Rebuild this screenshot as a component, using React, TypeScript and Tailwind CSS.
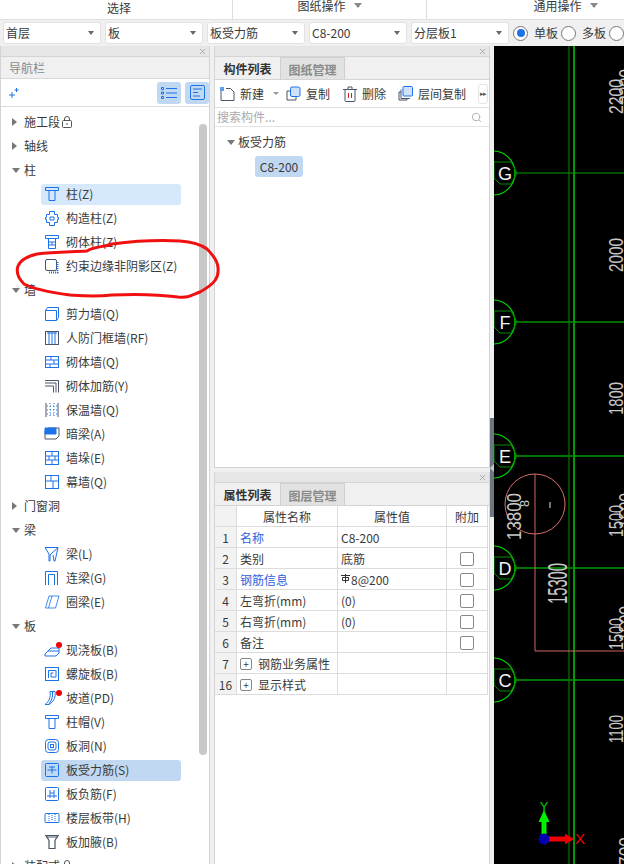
import { Search, X } from 'lucide-react';

const font = { fontFamily: '"Noto Sans CJK SC", "Liberation Sans", sans-serif' };
const BLUE = '#1c72e8';
const DARK = '#4a5568';

function Ico({ children }: { children: React.ReactNode }) {
  return (
    <svg width="16" height="16" viewBox="0 0 16 16" fill="none" stroke={BLUE} strokeWidth="1" className="shrink-0">
      {children}
    </svg>
  );
}

const icons: Record<string, React.ReactNode> = {
  column: <><path d="M1.5 1.5h13v3h-13zM4.5 4.5h7M5 4.5v10h6v-10" /></>,
  gz: <><path d="M5.5 1.5h5v3h3v3h1v2h-1v3h-3v3h-5v-3h-3v-3h-1v-2h1v-3h3z" /><path d="M6 7h4v3H6z" /></>,
  qt: <><path d="M1.5 1.5h13v3h-13zM4.5 4.5h7v10h-7zM4.5 8h7M4.5 11h7M8 8v3" /></>,
  yueshu: <><rect x="1.5" y="1.5" width="11" height="11" rx="1.5" stroke={DARK} /><path d="M13.5 4v10.5H4" stroke={BLUE} strokeWidth="2" strokeDasharray="1 1" /></>,
  shear: <><path d="M1.5 4.5h11v10h-11zM1.5 4.5l2-3h11v10l-2 3" /></>,
  rf: <><rect x="1.5" y="1.5" width="13" height="13" stroke={DARK} /><path d="M5 2v12M8 2v12M11 2v12M3 3h10" /></>,
  brick: <><rect x="1.5" y="2.5" width="13" height="11" /><path d="M1.5 6h13M1.5 10h13M7 2.5V6M10 6v4M6 10v3.5" /></>,
  rebar: <><path d="M1 2.5h13.5v12M1 5h11v9.5M1 8h8.5v6.5M9.5 8v6" stroke={DARK} /></>,
  insul: <><path d="M2 1v14M14 1v14" stroke={DARK} /><path d="M6 1v14M10 1v14M3 4h10M3 8h10M3 12h10" strokeDasharray="1 2" /></>,
  anliang: <><path d="M1 5l3-3h11v8l-3 3H1z" stroke={DARK} /><path d="M1 2h11v6H1z" fill={BLUE} /></>,
  duo: <><rect x="1.5" y="1.5" width="13" height="13" /><path d="M1.5 6h13M1.5 10h13M8 1.5V6M5 6v4M11 6v4M8 10v4.5" /></>,
  mu: <><rect x="1.5" y="1.5" width="13" height="13" /><path d="M1.5 7h13M7 1.5V7M9 7v7.5" /></>,
  beam: <><path d="M1 1.5h13L6 9v6h-1V8zM14 1.5L11 15h-1l-1-6" /></>,
  lian: <><path d="M1.5 15V1.5h12V15M4.5 15V4.5h6V15" /></>,
  quan: <><path d="M5 2h10l-3.5 12H1.5zM8 2L4.5 14" strokeOpacity="0.8" /></>,
  xj: <><path d="M1 12l3-3h11v2l-3 3H1zM4 9l3-3h8v3" /></>,
  spiral: <><rect x="1.5" y="1.5" width="13" height="13" /><path d="M4.5 12V4.5H12V11H7V7h2.5" /></>,
  ramp: <><path d="M6 1.5h5c1 5-1 10-6 13H1C5 12 7 7 6 1.5zM8.5 2c.5 4-.5 8-3.5 12" /></>,
  cap: <><path d="M1.5 1.5h13v3h-13zM5 4.5v10h6v-10" /></>,
  hole: <><rect x="1.5" y="1.5" width="13" height="13" rx="3" /><rect x="4" y="4" width="8" height="8" rx="2" /><rect x="6.5" y="6.5" width="3" height="3" /></>,
  rebarS: <><rect x="1.5" y="1.5" width="13" height="13" rx="1" /><path d="M3.5 8h9M8 4.5v7M5 5h6" /></>,
  rebarF: <><rect x="1.5" y="1.5" width="13" height="13" rx="1" /><path d="M3 10h10M6 4v8M10 4v8M6 7h4" /></>,
  band: <><rect x="1" y="3.5" width="14" height="9" rx="1" /><path d="M5 4v8M11 4v8M8 5v6" strokeDasharray="1 1" /></>,
  jiaye: <><path d="M1 1.5h14M2 1.5l3 5v8h6v-8l3-5" stroke={DARK} strokeWidth="1.2" /><path d="M2 3h12" stroke={DARK} /></>,
};

type Row =
  | { k: 'g'; t: string; open: boolean; lock?: boolean }
  | { k: 'i'; t: string; ic: string; sel?: 1 | 2; dot?: boolean };

const rows: Row[] = [
  { k: 'g', t: '施工段', open: false, lock: true },
  { k: 'g', t: '轴线', open: false },
  { k: 'g', t: '柱', open: true },
  { k: 'i', t: '柱(Z)', ic: 'column', sel: 1 },
  { k: 'i', t: '构造柱(Z)', ic: 'gz' },
  { k: 'i', t: '砌体柱(Z)', ic: 'qt' },
  { k: 'i', t: '约束边缘非阴影区(Z)', ic: 'yueshu' },
  { k: 'g', t: '墙', open: true },
  { k: 'i', t: '剪力墙(Q)', ic: 'shear' },
  { k: 'i', t: '人防门框墙(RF)', ic: 'rf' },
  { k: 'i', t: '砌体墙(Q)', ic: 'brick' },
  { k: 'i', t: '砌体加筋(Y)', ic: 'rebar' },
  { k: 'i', t: '保温墙(Q)', ic: 'insul' },
  { k: 'i', t: '暗梁(A)', ic: 'anliang' },
  { k: 'i', t: '墙垛(E)', ic: 'duo' },
  { k: 'i', t: '幕墙(Q)', ic: 'mu' },
  { k: 'g', t: '门窗洞', open: false },
  { k: 'g', t: '梁', open: true },
  { k: 'i', t: '梁(L)', ic: 'beam' },
  { k: 'i', t: '连梁(G)', ic: 'lian' },
  { k: 'i', t: '圈梁(E)', ic: 'quan' },
  { k: 'g', t: '板', open: true },
  { k: 'i', t: '现浇板(B)', ic: 'xj', dot: true },
  { k: 'i', t: '螺旋板(B)', ic: 'spiral' },
  { k: 'i', t: '坡道(PD)', ic: 'ramp', dot: true },
  { k: 'i', t: '柱帽(V)', ic: 'cap' },
  { k: 'i', t: '板洞(N)', ic: 'hole' },
  { k: 'i', t: '板受力筋(S)', ic: 'rebarS', sel: 2 },
  { k: 'i', t: '板负筋(F)', ic: 'rebarF' },
  { k: 'i', t: '楼层板带(H)', ic: 'band' },
  { k: 'i', t: '板加腋(B)', ic: 'jiaye' },
  { k: 'g', t: '装配式', open: false, lock: true },
];

function Caret({ open }: { open: boolean }) {
  return open ? (
    <span className="w-0 h-0 border-x-[4px] border-x-transparent border-t-[5px] border-t-[#777]" />
  ) : (
    <span className="w-0 h-0 border-y-[4px] border-y-transparent border-l-[5px] border-l-[#777]" />
  );
}

function TreeRow({ row }: { row: Row }) {
  if (row.k === 'g') {
    return (
      <div className="flex items-center h-6 pl-[11px]">
        <span className="w-3 flex items-center justify-start">
          <Caret open={row.open} />
        </span>
        <span>{row.t}</span>
        {row.lock && (
          <svg width="10" height="12" viewBox="0 0 10 12" fill="none" stroke="#555" className="ml-0.5">
            <rect x="0.5" y="4.5" width="9" height="7" rx="1" />
            <path d="M2.5 4.5V3a2.5 2.5 0 0 1 5 0v1.5M5 7v2" />
          </svg>
        )}
      </div>
    );
  }
  const bg = row.sel === 1 ? 'bg-[#d6e8fc]' : row.sel === 2 ? 'bg-[#c0d8f2]' : '';
  return (
    <div className="flex items-center h-6 pl-[40px]">
      <div className={`relative flex items-center w-[140px] h-[21px] rounded-[3px] pl-[3px] gap-[6px] ${bg}`}>
        {icons[row.ic] && <Ico>{icons[row.ic]}</Ico>}
        <span className="whitespace-nowrap">{row.t}</span>
        {row.dot && <span className="absolute w-[6px] h-[6px] rounded-full bg-[#f00000] left-[15px] top-[2px]" />}
      </div>
    </div>
  );
}

function PanelHead() {
  return (
    <div className="h-[11px] bg-[#e6e6e6] border-b border-[#d4d4d4] flex items-center justify-end pr-[2px] shrink-0">
      <X size={9} color="#999" />
    </div>
  );
}

function Select({ label }: { label: string }) {
  return (
    <div className="flex items-center justify-between shrink-0 w-[98px] h-[22px] bg-white rounded-[3px] border border-[#e2e2e2] pl-[2px] pr-[6px]">
      <span>{label}</span>
      <span className="w-0 h-0 border-x-[3px] border-x-transparent border-t-[4px] border-t-[#666]" />
    </div>
  );
}

function Radio({ on }: { on?: boolean }) {
  return (
    <span className="w-[15px] h-[15px] rounded-full border border-[#777] bg-white flex items-center justify-center shrink-0">
      {on && <span className="w-[8px] h-[8px] rounded-full bg-[#1c72e8]" />}
    </span>
  );
}

function Tabs({ a, b }: { a: string; b: string }) {
  return (
    <div className="flex h-[23px] bg-[#f0f0f0] border-b border-[#d4d4d4] shrink-0">
      <div className="w-[65px] flex items-center justify-center pt-[2px] font-bold text-[#333]">{a}</div>
      <div className="w-[65px] flex items-center justify-center pt-[2px] text-[#8a8a8a] font-bold bg-[#e2e2e2] border border-b-0 border-[#cfcfcf]">{b}</div>
    </div>
  );
}

function Tool({ icon, label, w, caret }: { icon: React.ReactNode; label: string; w: string; caret?: boolean }) {
  return (
    <div className={`flex items-center gap-[5px] shrink-0 ${w}`}>
      {icon}
      <span className="whitespace-nowrap">{label}</span>
      {caret && <span className="ml-[4px] w-0 h-0 border-x-[3px] border-x-transparent border-t-[3px] border-t-[#999]" />}
    </div>
  );
}

const props = [
  { n: '1', name: '名称', val: 'C8-200', link: true },
  { n: '2', name: '类别', val: '底筋', box: true },
  { n: '3', name: '钢筋信息', val: '8@200', link: true, box: true, bar: true },
  { n: '4', name: '左弯折(mm)', val: '(0)', box: true },
  { n: '5', name: '右弯折(mm)', val: '(0)', box: true },
  { n: '6', name: '备注', val: '', box: true },
  { n: '7', name: '钢筋业务属性', val: '', plus: true },
  { n: '16', name: '显示样式', val: '', plus: true },
];

function PropTable() {
  const cell = 'border-r border-b border-[#dcdcdc] flex items-center pt-[2px]';
  return (
    <div className="grid grid-cols-[22px_101px_109px_41px] auto-rows-[21px]">
      <div className={`${cell} bg-[#f2f2f2]`} />
      <div className={`${cell} justify-center`}>属性名称</div>
      <div className={`${cell} justify-center`}>属性值</div>
      <div className={`${cell} justify-center`}>附加</div>
      {props.map((p) => (
        <div key={p.n} className="contents">
          <div className={`${cell} justify-center bg-[#f2f2f2]`}>{p.n}</div>
          <div className={`${cell} pl-[3px] ${p.link ? 'text-[#2f5fe0]' : ''}`}>
            {p.plus && (
              <span className="w-[12px] h-[12px] mr-[6px] border border-[#888] rounded-[2px] flex items-center justify-center text-[10px] leading-none">+</span>
            )}
            {p.name}
          </div>
          <div className={`${cell} pl-[3px]`}>
            {p.bar && (
              <svg width="10" height="10" viewBox="0 0 10 10" fill="none" stroke="#333" className="-mt-[3px]">
                <path d="M0 1.5h9M1.5 3.5h6v3h-6zM4.5 0v9" />
              </svg>
            )}
            {p.val}
          </div>
          <div className={`${cell} justify-center`}>
            {p.box && <span className="w-[14px] h-[14px] border border-[#888] rounded-[2px] bg-white" />}
          </div>
        </div>
      ))}
    </div>
  );
}

function Dim({ x, y, t, len, size = 21, color = '#c8c8c8' }: { x: number; y: number; t: string; len: number; size?: number; color?: string }) {
  return (
    <text
      transform={`translate(${x} ${y}) rotate(-90)`}
      fontSize={size}
      fill={color}
      textLength={len}
      lengthAdjust="spacingAndGlyphs"
      fontFamily='"Liberation Sans", sans-serif'
    >
      {t}
    </text>
  );
}

function Axis({ y, t, line }: { y: number; t: string; line: string }) {
  return (
    <g>
      <line x1="494" x2="624" y1={y} y2={y} stroke={line} strokeWidth="1.2" />
      <circle cx="493" cy={y} r="22" fill="#000" stroke="#00d800" strokeWidth="1.2" />
      <polygon
        points={`${494},${y - 11} ${511},${y - 11} ${517},${y} ${511},${y + 11} ${500},${y + 11} ${494},${y + 5}`}
        fill="none"
        stroke="#008a00"
      />
      <text x="505" y={y + 6.5} textAnchor="middle" fontSize="18" fill="#f4f4f4" fontFamily='"Liberation Sans", sans-serif'>
        {t}
      </text>
    </g>
  );
}

const axes: [string, number, string][] = [
  ['G', 173, '#00a000'],
  ['F', 322, '#00d800'],
  ['E', 456, '#00e800'],
  ['D', 568, '#00e800'],
  ['C', 680, '#00e800'],
];

function Canvas() {
  return (
    <svg viewBox="494 46 130 818" width="130" height="818" className="block bg-black shrink-0">
      {axes.map(([t, y, c]) => (
        <Axis key={t} y={y} t={t} line={c} />
      ))}
      <line x1="569" x2="569" y1="46" y2="864" stroke="#007a00" strokeWidth="1.2" />
      <line x1="574" x2="574" y1="46" y2="864" stroke="#009a00" strokeWidth="2" />
      <circle cx="535" cy="504" r="30" fill="none" stroke="#d87070" strokeWidth="1" />
      <path d="M535 474V651H624" fill="none" stroke="#d06464" strokeWidth="1" />
      <line x1="550" x2="550" y1="502" y2="508" stroke="#e8e8e8" />
      <Dim x={521} y={540} t="13800" len={47} />
      <Dim x={529} y={507} t="8" len={7} size={13} />
      <Dim x={567} y={604} t="15300" len={41} size={27} />
      <Dim x={623} y={114} t="2200" len={35} />
      <Dim x={633} y={104} t="2200" len={35} />
      <Dim x={623} y={272} t="2000" len={34} />
      <Dim x={623} y={415} t="1800" len={33} />
      <Dim x={623} y={537} t="1500" len={32} />
      <Dim x={633} y={528} t="1500" len={35} />
      <Dim x={623} y={650} t="1500" len={32} />
      <Dim x={633} y={641} t="1500" len={35} />
      <Dim x={623} y={743} t="1100" len={28} />
      <Dim x={633} y={866} t="700" len={29} />
      <path d="M541.5 839v-17h-3l5.5-12 5.5 12h-3v17z" fill="#00f000" />
      <path d="M544 836.5h21v-3l9 5.5-9 5.5v-3h-21z" fill="#f00000" />
      <circle cx="544" cy="839" r="5.5" fill="#0000b0" />
      <text x="544" y="811" textAnchor="middle" fontSize="13" fill="#00d000" fontFamily='"Liberation Sans", sans-serif'>Y</text>
      <text x="580" y="844" textAnchor="middle" fontSize="15" fill="#f00000" fontFamily='"Liberation Sans", sans-serif'>X</text>
    </svg>
  );
}

export default function App() {
  return (
    <div style={font} className="relative w-[624px] h-[864px] overflow-hidden bg-[#f0f0f0] text-[12px] leading-none text-[#3a3a3a]">
      {/* ribbon labels */}
      <div className="flex h-[19px] bg-white">
        <div className="w-[233px] flex items-center justify-center border-r border-[#ddd] pl-[6px] pb-[4px]">选择</div>
        <div className="w-[194px] flex items-center justify-center gap-2 border-r border-[#ddd] pb-[8px]">
          图纸操作
          <span className="w-0 h-0 border-x-[4px] border-x-transparent border-t-[5px] border-t-[#888]" />
        </div>
        <div className="flex-1 flex items-center justify-center gap-2 pl-[80px] pb-[8px]">
          通用操作
          <span className="w-0 h-0 border-x-[4px] border-x-transparent border-t-[5px] border-t-[#888]" />
        </div>
      </div>

      {/* property selects */}
      <div className="flex items-center h-[27px] pl-[3px] gap-1 border-t border-[#e0e0e0] bg-[#f0f0f0]">
        <Select label="首层" />
        <Select label="板" />
        <Select label="板受力筋" />
        <Select label="C8-200" />
        <Select label="分层板1" />
        <div className="flex items-center shrink-0 gap-[6px]">
          <Radio on />
          <span className="mr-[-3px]">单板</span>
          <Radio />
          <span className="mr-[-3px]">多板</span>
          <Radio />
        </div>
      </div>

      <div className="flex h-[818px]">
        {/* nav panel */}
        <div className="w-[210px] h-full flex flex-col border-x border-[#d4d4d4] shrink-0 bg-white">
          <PanelHead />
          <div className="h-[22px] flex items-center pl-2 text-[#8a8a8a] bg-[#f0f0f0] border-b border-[#d8d8d8] shrink-0">导航栏</div>
          <div className="h-[28px] flex items-center pl-2 pr-0 justify-between border-b border-[#dcdcdc] shrink-0">
            <svg width="10" height="10" viewBox="0 0 10 10" fill="none" stroke={BLUE}>
              <path d="M3 4v6M0 7h6M7.5 0v4M5.5 2h4" />
            </svg>
            <div className="flex gap-1">
              <div className="w-6 h-[22px] rounded-[3px] bg-[#c0d8f2] flex items-center justify-center">
                <svg width="16" height="12" viewBox="0 0 16 12" fill="none" stroke={BLUE}>
                  <path d="M5 1.5h11M5 6h11M5 10.5h11M0.5 0.5h2v2h-2zM0.5 5h2v2h-2zM0.5 9.5h2v2h-2z" />
                </svg>
              </div>
              <div className="w-6 h-[22px] rounded-[3px] bg-[#c0d8f2] flex items-center justify-center">
                <svg width="15" height="15" viewBox="0 0 15 15" fill="none" stroke={BLUE}>
                  <rect x="0.5" y="0.5" width="14" height="14" rx="1.5" />
                  <path d="M3 4h9M3 7.5h5M3 11h7" />
                </svg>
              </div>
            </div>
          </div>
          <div className="relative flex-1 overflow-hidden pt-[3px]">
            {rows.map((r) => (
              <TreeRow key={r.t} row={r} />
            ))}
            <div className="absolute right-[2px] top-[17px] w-2 h-[631px] rounded-full bg-[#c8c8c8]" />
          </div>
        </div>

        <div className="w-[4px] shrink-0" />

        {/* middle column */}
        <div className="w-[276px] h-full flex flex-col gap-[4px] shrink-0">
          <div className="h-[422px] flex flex-col bg-white border-x border-b border-[#d4d4d4]">
            <PanelHead />
            <Tabs a="构件列表" b="图纸管理" />
            <div className="relative h-[28px] flex items-center pl-[5px] border-b border-[#e0e0e0] shrink-0">
              <Tool
                w="w-[66px]"
                caret
                label="新建"
                icon={
                  <svg width="15" height="16" viewBox="0 0 15 16" fill="none" stroke={DARK}>
                    <path d="M1 5v9.5h13V6l-3.5-3.5H6" />
                    <rect x="0" y="1" width="4" height="4" fill={BLUE} stroke="none" opacity="0.7" />
                  </svg>
                }
              />
              <Tool
                w="w-[57px]"
                label="复制"
                icon={
                  <svg width="15" height="15" viewBox="0 0 15 15" fill="none" stroke={DARK}>
                    <path d="M4 5H1v9h9v-3" />
                    <rect x="4.5" y="1" width="9.5" height="9.5" rx="1.5" fill="#cfe2fa" stroke={BLUE} />
                  </svg>
                }
              />
              <Tool
                w="w-[55px]"
                label="删除"
                icon={
                  <svg width="14" height="16" viewBox="0 0 14 16" fill="none" stroke={DARK}>
                    <path d="M0 3.5h14M5 3V1h4v2M2 3.5v11a1 1 0 0 0 1 1h8a1 1 0 0 0 1-1v-11" />
                    <path d="M5.5 7v5M8.5 7v5" stroke="#d02020" />
                  </svg>
                }
              />
              <Tool
                w="w-[80px]"
                label="层间复制"
                icon={
                  <svg width="15" height="15" viewBox="0 0 15 15" fill="none" stroke={DARK}>
                    <path d="M3 6H1v8h8v-1M3 3.5v9h9" />
                    <rect x="5" y="0.5" width="9.5" height="9.5" rx="1" fill="#cfe2fa" stroke={BLUE} />
                  </svg>
                }
              />
              <div className="ml-auto mr-[1px] w-[10px] h-[20px] rounded-[3px] border border-[#e4e4e4] flex items-center justify-center text-[7px] text-[#555] tracking-[-1px]">
                ▸▸
              </div>
            </div>
            <div className="h-[19px] flex items-center justify-between pl-[2px] pr-[7px] text-[#ababab] border-b border-[#e4e4e4] shrink-0">
              <span>搜索构件...</span>
              <Search size={11} color="#aaa" />
            </div>
            <div className="pt-[3px] pl-[12px]">
              <div className="flex items-center h-[24px] gap-[3px]">
                <Caret open />
                <span>板受力筋</span>
              </div>
              <div className="ml-[28px] mt-[2px] w-[48px] h-[21px] rounded-[3px] bg-[#c0d8f2] flex items-center justify-center">C8-200</div>
            </div>
          </div>
          <div className="flex-1 flex flex-col bg-white border-x border-[#d4d4d4]">
            <PanelHead />
            <Tabs a="属性列表" b="图层管理" />
            <PropTable />
          </div>
        </div>

        {/* splitter */}
        <div className="w-[4px] shrink-0 bg-[#f0f0f0] flex flex-col">
          <div className="h-[372px]" />
          <div className="h-[99px] bg-[#6d7783] flex items-center justify-center">
            <span className="w-0 h-0 border-y-[4px] border-y-transparent border-r-[4px] border-r-[#c8ccd0]" />
          </div>
        </div>

        <Canvas />
      </div>

      {/* red annotation scribble */}
      <svg className="absolute inset-0 pointer-events-none" width="624" height="864" fill="none">
        <path
          d="M87 251C95 246 105 247 112 244C135 241 160 240 180 241C195 242 203 246 207 249C213 255 218 261 218 268C219 277 216 283 200 292C190 296 188 298 178 297C155 294 135 294 112 295C95 297 85 296 70 295C55 293 35 290 24 284C18 278 16 272 18 266C21 259 28 256 37 254C55 252 70 252 87 251Z"
          stroke="#f01010"
          strokeWidth="3"
        />
      </svg>
    </div>
  );
}
